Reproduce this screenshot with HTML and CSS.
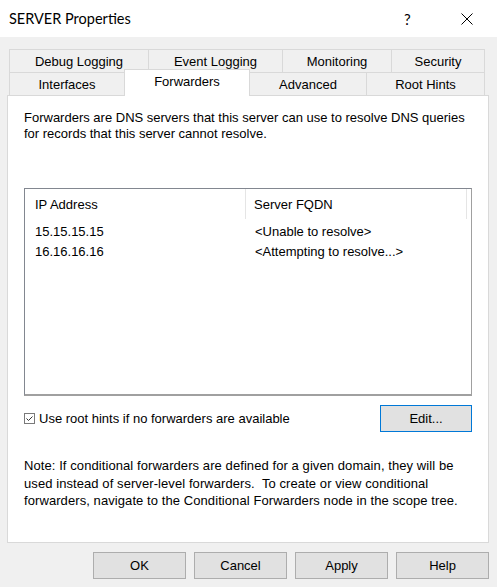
FILE: index.html
```html
<!DOCTYPE html>
<html>
<head>
<meta charset="utf-8">
<link rel="stylesheet" href="styles.css">
</head>
<body>
<div class="window">
  <div class="titlebar">
    <span class="title">SERVER Properties</span>
    <span class="help">?</span>
    <span class="close"><svg width="12" height="12" viewBox="0 0 12 12"><path d="M0.5 0.5 L11.5 11.5 M11.5 0.5 L0.5 11.5" stroke="#000" stroke-width="1" fill="none"/></svg></span>
  </div>
  <div class="content">
    <div class="tabrow row1">
      <div class="tab t-debug">Debug Logging</div>
      <div class="tab t-event">Event Logging</div>
      <div class="tab t-mon">Monitoring</div>
      <div class="tab t-sec last">Security</div>
    </div>
    <div class="tabrow row2">
      <div class="tab t-int">Interfaces</div>
      <div class="tab t-fwd selected">Forwarders</div>
      <div class="tab t-adv">Advanced</div>
      <div class="tab t-root last">Root Hints</div>
    </div>
    <div class="panel">
      <p class="desc">Forwarders are DNS servers that this server can use to resolve DNS queries<br>for records that this server cannot resolve.</p>
      <div class="list">
        <div class="lhead">
          <div class="c1">IP Address</div>
          <div class="c2">Server FQDN</div>
          <div class="c3"></div>
        </div>
        <div class="lrow first"><div class="c1">15.15.15.15</div><div class="c2">&lt;Unable to resolve&gt;</div></div>
        <div class="lrow"><div class="c1">16.16.16.16</div><div class="c2">&lt;Attempting to resolve...&gt;</div></div>
      </div>
      <div class="opts">
        <label class="chk"><svg class="box" width="11" height="11" viewBox="0 0 11 11"><rect x="0.5" y="0.5" width="10" height="10" fill="#fff" stroke="#7a7a7a"/><path d="M2.5 5.5 L4.5 7.5 L8.5 3.5" stroke="#333" stroke-width="1" fill="none"/></svg>Use root hints if no forwarders are available</label>
        <button class="btn edit">Edit...</button>
      </div>
      <p class="note">Note: If conditional forwarders are defined for a given domain, they will be<br>used instead of server-level forwarders.&nbsp; To create or view conditional<br>forwarders, navigate to the Conditional Forwarders node in the scope tree.</p>
    </div>
    <div class="buttons">
      <button class="btn">OK</button>
      <button class="btn">Cancel</button>
      <button class="btn">Apply</button>
      <button class="btn">Help</button>
    </div>
  </div>
</div>
</body>
</html>
```
FILE: styles.css
```css
html, body {
  margin: 0;
  padding: 0;
}
body {
  width: 497px;
  height: 587px;
  overflow: hidden;
  background: #f0f0f0;
  font-family: "Liberation Sans", Arial, sans-serif;
  font-size: 13px;
  color: #000;
}
.window {
  width: 497px;
  height: 587px;
  display: flex;
  flex-direction: column;
}
.titlebar {
  height: 37px;
  background: #fff;
  display: flex;
  align-items: center;
  padding-left: 9px;
  box-sizing: border-box;
}
.title {
  font-family: Lato, "Liberation Sans", sans-serif;
  font-size: 14.5px;
  flex: 1;
  padding-bottom: 1px;
}
.help {
  font-family: Lato, "Liberation Sans", sans-serif;
  font-size: 15px;
  width: 12px;
  margin-right: 45px;
}
.close {
  width: 12px;
  height: 12px;
  margin-right: 24px;
  display: flex;
}
.content {
  flex: 1;
  padding-top: 12px;
  display: flex;
  flex-direction: column;
}
.tabrow {
  display: flex;
  height: 23px;
  margin-left: 9px;
  align-items: flex-start;
}
.tab {
  box-sizing: border-box;
  height: 23px;
  border-top: 1px solid #d9d9d9;
  border-left: 1px solid #d9d9d9;
  display: flex;
  align-items: center;
  justify-content: center;
  padding-top: 1px;
}
.tab.last {
  border-right: 1px solid #d9d9d9;
}
.t-debug { width: 139px; }
.t-event { width: 134px; }
.t-mon { width: 109px; }
.t-sec { width: 94px; }
.t-int { width: 115px; }
.t-fwd { width: 126px; }
.t-adv { width: 116px; }
.t-root { width: 119px; }
.tab.selected {
  background: #fff;
  height: 27px;
  margin-top: -3px;
  border-right: 1px solid #d9d9d9;
  position: relative;
  z-index: 1;
  align-items: flex-start;
  padding-top: 4px;
}
.tab.selected + .tab {
  border-left: none;
}
.panel {
  margin-left: 7px;
  width: 482px;
  height: 448px;
  box-sizing: border-box;
  background: #fff;
  border: 1px solid #d9d9d9;
  padding: 0 16px;
  display: flex;
  flex-direction: column;
}
.desc {
  margin: 14px 0 0 0;
  line-height: 16px;
}
.list {
  margin-top: 46px;
  height: 208px;
  box-sizing: border-box;
  border: 1px solid #828790;
  border-right-color: #a0a0a0;
  border-bottom: 2px solid #a0a0a0;
  background: #fff;
}
.lhead {
  display: flex;
  height: 30px;
}
.lhead > div {
  display: flex;
  align-items: center;
  box-sizing: border-box;
}
.c1 {
  width: 221px;
  padding-left: 10px;
  box-sizing: border-box;
}
.c2 {
  padding-left: 8px;
}
.lhead .c1 {
  border-right: 1px solid #e5e5e5;
}
.lhead .c2 {
  width: 221px;
  border-right: 1px solid #e5e5e5;
}
.lrow {
  display: flex;
  height: 20px;
  align-items: center;
}
.lrow.first {
  margin-top: 2px;
}
.lrow .c2 {
  padding-left: 9px;
}
.opts {
  display: flex;
  align-items: center;
  justify-content: space-between;
  margin-top: 9px;
}
.chk {
  display: flex;
  align-items: center;
  gap: 4px;
}
.box {
  display: block;
}
.btn {
  font-family: "Liberation Sans", Arial, sans-serif;
  font-size: 13px;
  color: #000;
  width: 93px;
  height: 27px;
  box-sizing: border-box;
  background: #e1e1e1;
  border: 1px solid #adadad;
  padding: 0;
  margin: 0;
}
.btn.edit {
  width: 92px;
  border-color: #0078d7;
}
.note {
  margin: 25px 0 0 0;
  line-height: 17.5px;
  letter-spacing: 0.08px;
}
.buttons {
  display: flex;
  justify-content: flex-end;
  gap: 8px;
  margin-top: 9px;
  margin-right: 8px;
}
```
